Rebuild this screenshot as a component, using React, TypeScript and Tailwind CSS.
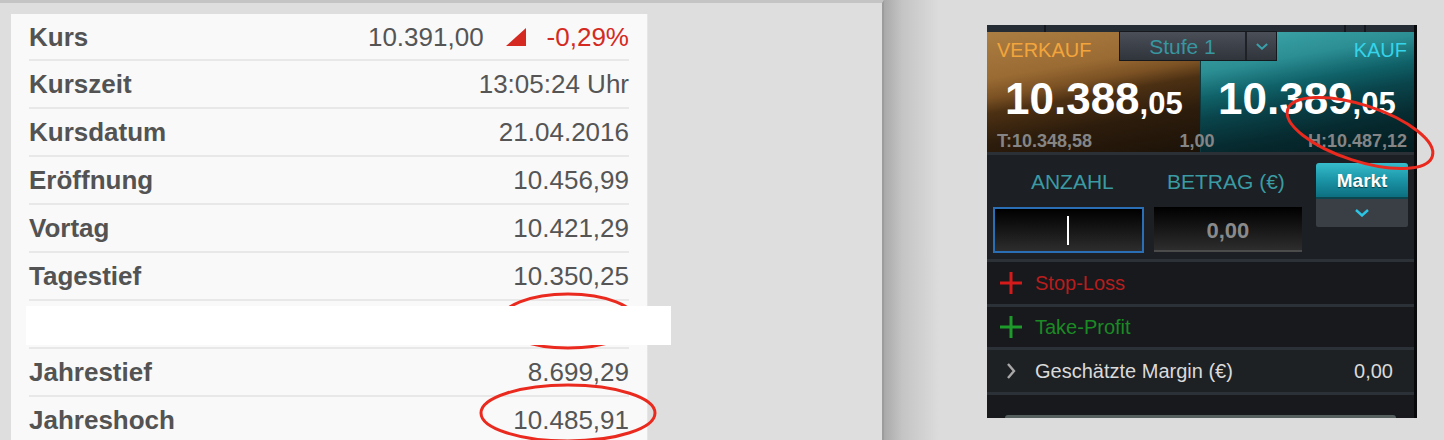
import React from "react";

type Row = { label: string; value?: React.ReactNode; first?: boolean };

function Triangle() {
  return (
    <svg width="20" height="18" viewBox="0 0 20 18" className="shrink-0">
      <polygon points="0,18 20,0 20,18" fill="#d42a22" />
    </svg>
  );
}

const rows: Row[] = [
  {
    label: "Kurs",
    first: true,
    value: (
      <div className="flex items-center">
        <span>10.391,00</span>
        <span className="ml-[22px] mr-[21px]">
          <Triangle />
        </span>
        <span className="text-[#d42a22]">-0,29%</span>
      </div>
    ),
  },
  { label: "Kurszeit", value: "13:05:24 Uhr" },
  { label: "Kursdatum", value: "21.04.2016" },
  { label: "Eröffnung", value: "10.456,99" },
  { label: "Vortag", value: "10.421,29" },
  { label: "Tagestief", value: "10.350,25" },
  { label: "", value: "" },
  { label: "Jahrestief", value: "8.699,29" },
  { label: "Jahreshoch", value: "10.485,91" },
];

function LeftPanel() {
  return (
    <div className="w-[884px] h-full shrink-0 bg-[#dedede] border-t-[3px] border-t-[#c4c4c4] border-r-2 border-r-[#9c9c9c] pl-[11px] pt-[11px]">
      <div className="w-[637px] h-full bg-[#f9f9f9] border-r border-r-[#e6e6e6] px-[18px]">
        {rows.map((r, i) => (
          <div
            key={i}
            className={`flex items-center justify-between border-b-2 border-b-[#e8e8e8] text-[26px] leading-none ${
              r.first ? "h-[47px]" : "h-[48px]"
            }`}
          >
            <span className="font-bold text-[#535353]">{r.label}</span>
            <span className="text-[#555555]">{r.value}</span>
          </div>
        ))}
      </div>
    </div>
  );
}

function ChevronDown({ color, w = 14, h = 8 }: { color: string; w?: number; h?: number }) {
  return (
    <svg width={w} height={h} viewBox="0 0 14 8">
      <polyline points="1,1 7,6.5 13,1" fill="none" stroke={color} strokeWidth="2.4" />
    </svg>
  );
}

function Plus({ color }: { color: string }) {
  return (
    <svg width="22" height="22" viewBox="0 0 22 22" className="shrink-0">
      <rect x="0" y="9.5" width="22" height="3" fill={color} />
      <rect x="9.5" y="0" width="3" height="22" fill={color} />
    </svg>
  );
}

function Widget() {
  return (
    <div className="relative w-[430px] h-[393px] bg-[#17191c] border-r-[3px] border-r-[#08090a] flex flex-col">
      {/* top strip */}
      <div className="h-[7px] shrink-0 bg-[#262c33] flex">
        <div className="w-[59px] border-r-2 border-r-[#14171b]" />
        <div className="w-[300px] border-r-2 border-r-[#14171b]" />
        <div className="w-[20px] border-r-2 border-r-[#14171b]" />
        <div className="flex-1" />
      </div>

      {/* header */}
      <div className="relative grid grid-cols-[213px_214px] grid-rows-[auto_auto_1fr] h-[123px] shrink-0 border-b-[3px] border-b-[#2b3036]">
        <div className="col-start-1 row-start-1 row-span-3 bg-[linear-gradient(170deg,#ab7e43_0%,#9a6b33_30%,#7c5224_42%,#4c3013_52%,#2c1c0c_72%,#1c1208_100%)]" />
        <div className="col-start-2 row-start-1 row-span-3 border-l border-l-[#0b3a40] bg-[linear-gradient(170deg,#40a9ad_0%,#2b8e93_26%,#106269_42%,#0a454c_55%,#062b30_75%,#031b1f_100%)]" />

        <div className="col-start-1 row-start-1 pl-[10px] pt-[8px] text-[20px] leading-none text-[#f3a53c]">
          VERKAUF
        </div>
        <div className="col-start-2 row-start-1 justify-self-end pr-[7px] pt-[8px] text-[20px] leading-none text-[#35d4ea]">
          KAUF
        </div>

        <div className="col-start-1 row-start-2 pl-[18px] pt-[17px] flex items-baseline text-white font-bold leading-none">
          <span className="text-[44px]">10.388</span>
          <span className="text-[31px]">,05</span>
        </div>
        <div className="col-start-2 row-start-2 pl-[18px] pt-[17px] flex items-baseline text-white font-bold leading-none">
          <span className="text-[44px]">10.389</span>
          <span className="text-[31px]">,05</span>
        </div>

        <div className="col-start-1 col-span-2 row-start-3 self-end grid grid-cols-3 items-baseline px-[10px] pb-[2px] pr-[7px] text-[18px] font-bold leading-none text-[#858585]">
          <span className="justify-self-start">T:10.348,58</span>
          <span className="justify-self-center pr-[10px]">1,00</span>
          <span className="justify-self-end">H:10.487,12</span>
        </div>

        {/* Stufe dropdown */}
        <div className="absolute left-[132px] -top-[1px] w-[158px] h-[30px] flex border border-[#15181c] bg-[linear-gradient(to_bottom,#4a4f58,#30343b)]">
          <div className="w-[125px] flex items-center justify-center text-[21px] leading-none text-[#3896a0]">
            Stufe 1
          </div>
          <div className="flex-1 border-l-2 border-l-[#1e2126] flex items-center justify-center">
            <ChevronDown color="#3aa0aa" w={12} h={7} />
          </div>
        </div>
      </div>

      {/* form */}
      <div className="h-[107px] shrink-0 flex px-[6px] bg-[#1c1f23] border-b-[3px] border-b-[#2c3137]">
        <div className="w-[151px] flex flex-col">
          <div className="h-[52px] flex items-center justify-center pl-[8px] text-[21px] leading-none text-[#3a9ba2]">
            ANZAHL
          </div>
          <div className="h-[46px] border-2 border-[#2a6fb5] bg-[linear-gradient(to_bottom,#000000,#2d2d2d)] flex items-center justify-center">
            <div className="w-[2px] h-[29px] bg-white" />
          </div>
        </div>
        <div className="w-[149px] ml-[10px] flex flex-col">
          <div className="h-[52px] flex items-center justify-center pr-[4px] text-[21px] leading-none text-[#3a9ba2]">
            BETRAG (€)
          </div>
          <div className="h-[45px] border-b-2 border-b-[#4b4b4b] bg-[linear-gradient(to_bottom,#000000,#2d2d2d)] flex items-center justify-center pt-[4px] text-[22px] font-bold leading-none text-[#8a8a8a]">
            0,00
          </div>
        </div>
        <div className="w-[92px] ml-[14px] pt-[8px] flex flex-col">
          <div className="h-[36px] rounded-t-[3px] bg-[linear-gradient(to_bottom,#36bccb,#1a94a6_50%,#0d6f80)] border-b-2 border-b-[#0a4550] flex items-center justify-center text-[19px] font-bold leading-none text-white [text-shadow:0_1px_1px_rgba(0,0,0,0.5)]">
            Markt
          </div>
          <div className="h-[28px] bg-[#3a3f45] rounded-b-[2px] flex items-center justify-center">
            <ChevronDown color="#2cc4e4" />
          </div>
        </div>
      </div>

      {/* Stop-Loss */}
      <div className="h-[45px] shrink-0 flex items-center pl-[13px] bg-[#17191c] border-b-[3px] border-b-[#2c3137]">
        <Plus color="#d41a1a" />
        <span className="ml-[13px] text-[20px] leading-none text-[#b81d1d]">Stop-Loss</span>
      </div>

      {/* Take-Profit */}
      <div className="h-[43px] shrink-0 flex items-center pl-[13px] bg-[#17191c] border-b-[3px] border-b-[#2c3137]">
        <Plus color="#1e9a2a" />
        <span className="ml-[13px] text-[20px] leading-none text-[#1b8a25]">Take-Profit</span>
      </div>

      {/* Margin */}
      <div className="h-[45px] shrink-0 flex items-center pl-[19px] pr-[21px] bg-[#1e2124] border-b-[3px] border-b-[#2c3137]">
        <svg width="10" height="16" viewBox="0 0 10 16" className="shrink-0">
          <polyline points="2,1 8,8 2,15" fill="none" stroke="#a8a8a8" strokeWidth="2.4" />
        </svg>
        <span className="ml-[19px] text-[20px] leading-none text-[#dadada]">Geschätzte Margin (€)</span>
        <span className="ml-auto text-[20px] leading-none text-[#dadada]">0,00</span>
      </div>

      <div className="flex-1" />
      <div className="mx-[18px] h-[3px] rounded-t-[3px] bg-[#56605f]" />
    </div>
  );
}

function Annotations() {
  return (
    <svg
      className="absolute left-0 top-0 z-10 pointer-events-none"
      width="1444"
      height="440"
      viewBox="0 0 1444 440"
    >
      <ellipse cx="568" cy="413" rx="87" ry="28" fill="none" stroke="#ea2a1e" strokeWidth="3" />
      <ellipse cx="568" cy="321" rx="68" ry="27" fill="none" stroke="#ea2a1e" strokeWidth="3" />
      <ellipse
        cx="1360"
        cy="133"
        rx="76"
        ry="28"
        fill="none"
        stroke="#ea2a1e"
        strokeWidth="3"
        transform="rotate(18 1360 133)"
      />
    </svg>
  );
}

export default function App() {
  return (
    <div className="relative flex w-[1444px] h-[440px] overflow-hidden bg-[#dcdcdc] font-['Liberation_Sans',Arial,sans-serif]">
      <LeftPanel />
      <div className="flex-1 h-full bg-[linear-gradient(to_right,#a9a9a9_0px,#c4c4c4_18px,#dcdcdc_55px)] pl-[103px] pt-[25px]">
        <Widget />
      </div>
      <Annotations />
      <div className="absolute left-[26px] top-[306px] w-[645px] h-[39px] bg-white z-20" />
    </div>
  );
}
